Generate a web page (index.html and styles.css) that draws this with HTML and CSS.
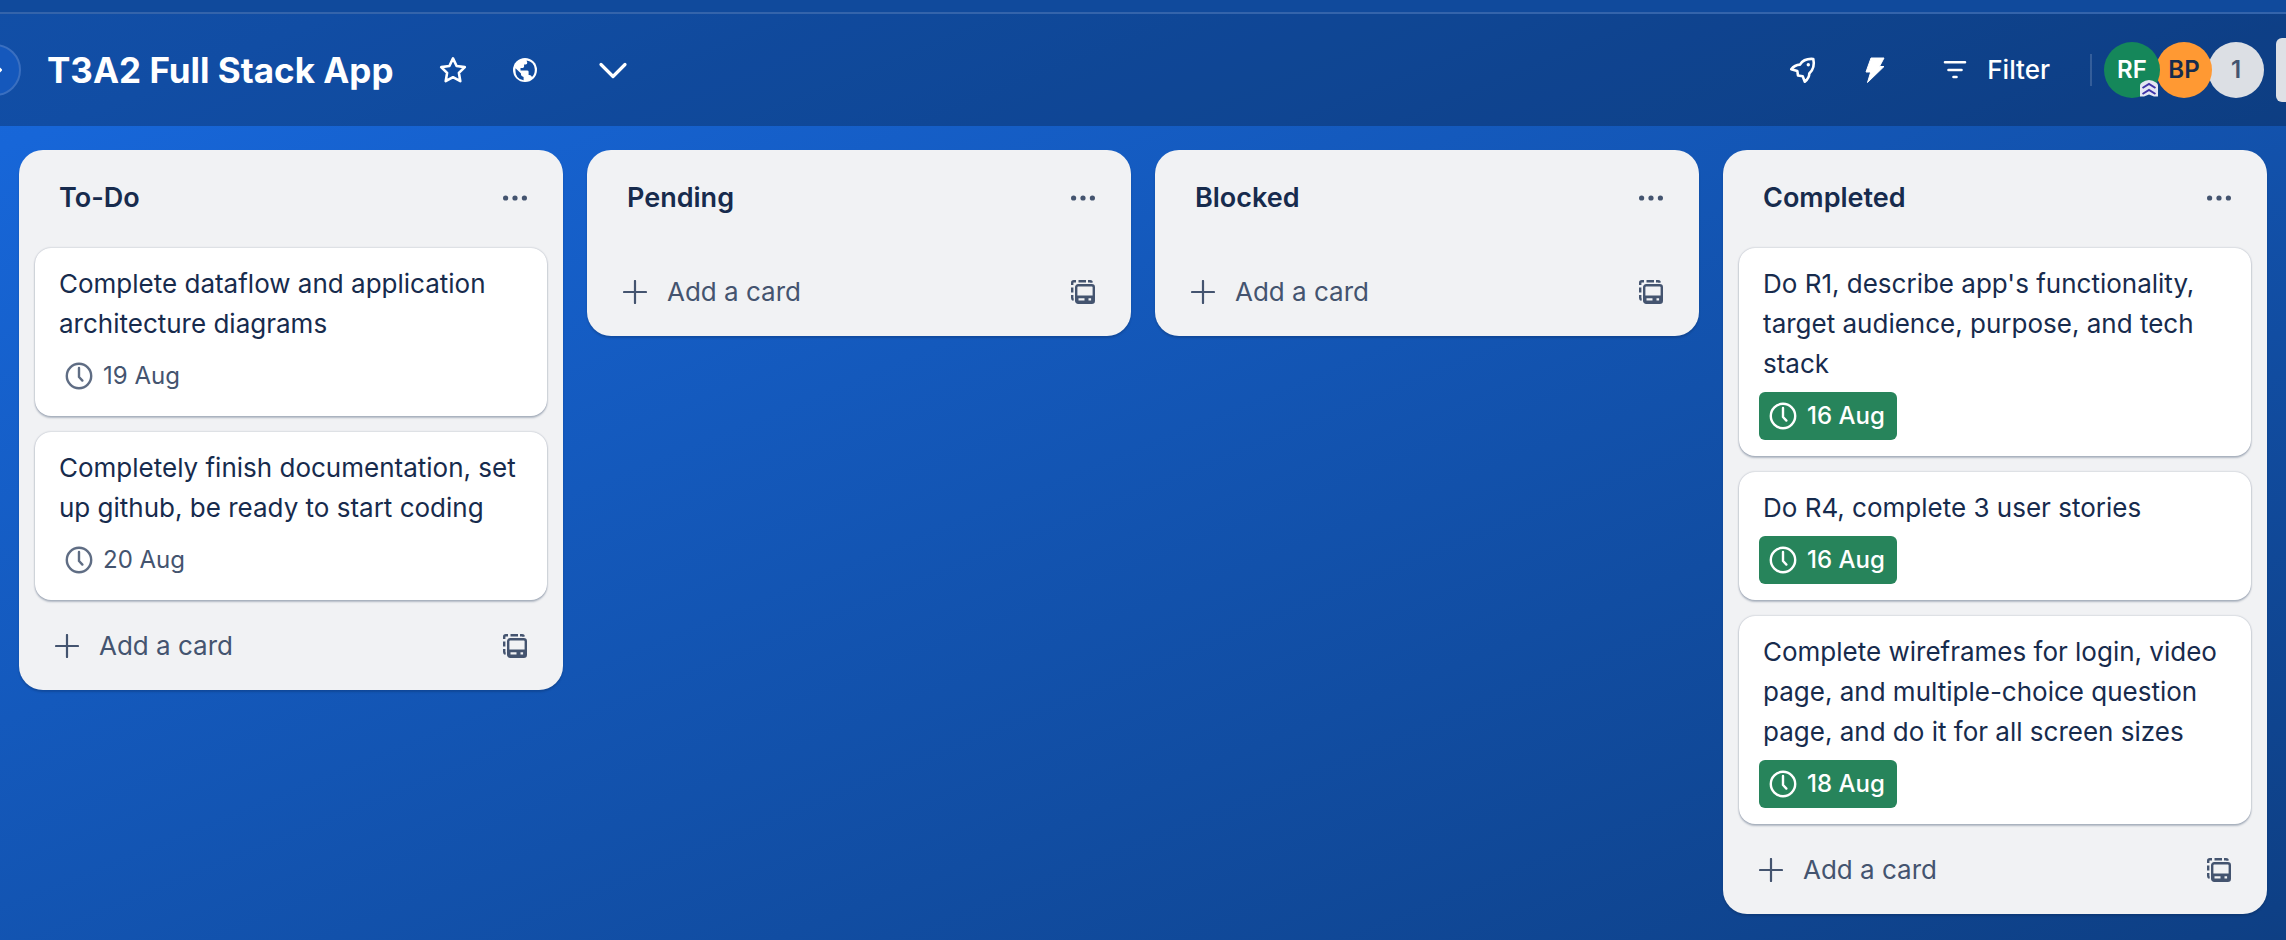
FILE: index.html
```
<!DOCTYPE html>
<html lang="en">
<head>
<meta charset="utf-8">
<title>T3A2 Full Stack App</title>
<link rel="stylesheet" href="styles.css">
</head>
<body>
<svg class="sprite" aria-hidden="true">
  <symbol id="clock" viewBox="0 0 32 32"><g fill="none" stroke="currentColor" stroke-width="2.4" stroke-linecap="round" stroke-linejoin="round"><circle cx="16" cy="16" r="12.2"/><path d="M16 8v9l3.4 3.6"/></g></symbol>
  <symbol id="plus" viewBox="0 0 24 24"><path d="M12 1v22M1 12h22" fill="none" stroke="currentColor" stroke-width="2.2" stroke-linecap="round"/></symbol>
  <symbol id="dots" viewBox="0 0 24 24"><g fill="currentColor"><circle cx="2.6" cy="12" r="2.6"/><circle cx="12" cy="12" r="2.6"/><circle cx="21.4" cy="12" r="2.6"/></g></symbol>
  <symbol id="template" viewBox="0 0 24 24"><g fill="none" stroke="currentColor" stroke-width="2.4"><path d="M1.2 5V2.800Q1.200 1.200 2.800 1.200H5M7.500 1.200h7.500M17 1.200h2.200q1.300 0 1.700 1.400M1.200 7.500v5M1.200 15v3q0 1.500 1.400 1.900"/><rect x="5.200" y="5.200" width="17.600" height="17.600" rx="2"/></g><path fill="currentColor" fill-rule="evenodd" d="M5 15.500h18v7.500H5zM7.500 18.200h6v2.400h-6zM17.500 18.200h2.600v2.400h-2.600z"/></symbol>
</svg>
<div class="topbar"></div>
<header class="header">
  <button class="toggle" aria-label="Expand sidebar"><svg viewBox="0 0 48 48"><path d="M25 19.500l4.500 4.500-4.500 4.500" fill="none" stroke="#fff" stroke-width="3" stroke-linecap="round" stroke-linejoin="round"/></svg></button>
  <h1 class="title">T3A2 Full Stack App</h1>
  <button class="icon-btn" aria-label="Star board"><svg viewBox="0 0 32 32"><path d="M16 4.400l3.600 7.600 8.200 1.100-5.900 5.800 1.400 8.300-7.300-4-7.300 4 1.400-8.300-5.900-5.800 8.200-1.100z" fill="none" stroke="#fff" stroke-width="2.600" stroke-linejoin="round"/></svg></button>
  <button class="icon-btn" aria-label="Visibility"><svg viewBox="0 0 32 32"><circle cx="16" cy="16" r="12" fill="#fff"/><path fill="#114b9e" d="M6.500 14.200l5.500 5.300v1.200q0 1.600 2.600 2.200v3.400Q6.300 25 6.400 16zM17.600 6.400q7.600 1.200 8.200 8.800.1 5-2.800 7.700-.8-1.900-2.600-1.900h-.8v-3.200q0-1.400-1.500-1.400h-6.600v-2.400h2.200q1.400 0 1.400-1.400v-2.200h1.600q1.600 0 1.600-1.600z"/></svg></button>
  <button class="icon-btn wide" aria-label="Views"><svg viewBox="0 0 32 32"><path d="M4 10.500l12 12 12-12" fill="none" stroke="#fff" stroke-width="3.200" stroke-linecap="round" stroke-linejoin="round"/></svg></button>
  <div class="actions">
    <button class="icon-btn" aria-label="Power-Ups"><svg viewBox="0 0 32 32"><path d="M4.200 15.200C6.500 12.200 9 10.800 13 10.600 15.500 6.500 20 4.500 26.300 5 27.700 11 26 16 22.300 19.500 22.300 22.500 20.500 25.500 17.800 27.700L15.700 22.300 11 21.500 10.300 17z" fill="none" stroke="#fff" stroke-width="2.600" stroke-linejoin="round"/><circle cx="21.300" cy="10.800" r="1.700" fill="#fff"/></svg></button>
    <button class="icon-btn" aria-label="Automation"><svg viewBox="0 0 32 32"><path d="M12 4h13l-4.500 8.500H25L8.500 28.500l3.200-10.500H7z" fill="#fff" stroke="#fff" stroke-linejoin="round"/></svg></button>
    <button class="filter"><svg viewBox="0 0 32 32"><path d="M6 8.300h20M9.500 16h13M14.500 23h3" fill="none" stroke="#fff" stroke-width="2.600" stroke-linecap="round"/></svg>Filter</button>
    <span class="divider"></span>
    <div class="members">
      <button class="avatar rf">RF<svg class="rank" viewBox="0 0 18 18"><path d="M9 0q4 .3 7 2.500 2 1 2 3V16.500l-4 0-5-2-5 2-4 0V5.500q0-2 2-3Q5 .3 9 0z" fill="#e4e6f2"/><path d="M2.500 8L9 4l6.500 4M2.500 14L9 10l6.500 4" fill="none" stroke="#3f34a8" stroke-width="2"/></svg></button>
      <button class="avatar bp">BP</button>
      <button class="avatar more">1</button>
    </div>
    <button class="share" aria-label="Share"></button>
  </div>
</header>
<main class="board">
  <section class="list">
    <div class="list-head"><h2>To-Do</h2><button aria-label="List actions"><svg><use href="#dots"/></svg></button></div>
    <ul class="cards">
      <li class="card"><p>Complete dataflow and application architecture diagrams</p><span class="due"><svg><use href="#clock"/></svg>19 Aug</span></li>
      <li class="card"><p>Completely finish documentation, set up github, be ready to start coding</p><span class="due"><svg><use href="#clock"/></svg>20 Aug</span></li>
    </ul>
    <div class="list-foot"><button class="add"><svg><use href="#plus"/></svg>Add a card</button><button class="template" aria-label="Create from template"><svg><use href="#template"/></svg></button></div>
  </section>
  <section class="list">
    <div class="list-head"><h2>Pending</h2><button aria-label="List actions"><svg><use href="#dots"/></svg></button></div>
    <div class="list-foot"><button class="add"><svg><use href="#plus"/></svg>Add a card</button><button class="template" aria-label="Create from template"><svg><use href="#template"/></svg></button></div>
  </section>
  <section class="list">
    <div class="list-head"><h2>Blocked</h2><button aria-label="List actions"><svg><use href="#dots"/></svg></button></div>
    <div class="list-foot"><button class="add"><svg><use href="#plus"/></svg>Add a card</button><button class="template" aria-label="Create from template"><svg><use href="#template"/></svg></button></div>
  </section>
  <section class="list">
    <div class="list-head"><h2>Completed</h2><button aria-label="List actions"><svg><use href="#dots"/></svg></button></div>
    <ul class="cards">
      <li class="card"><p>Do R1, describe app's functionality, target audience, purpose, and tech stack</p><span class="due done"><svg><use href="#clock"/></svg>16 Aug</span></li>
      <li class="card"><p>Do R4, complete 3 user stories</p><span class="due done"><svg><use href="#clock"/></svg>16 Aug</span></li>
      <li class="card"><p>Complete wireframes for login, video page, and multiple-choice question page, and do it for all screen sizes</p><span class="due done"><svg><use href="#clock"/></svg>18 Aug</span></li>
    </ul>
    <div class="list-foot"><button class="add"><svg><use href="#plus"/></svg>Add a card</button><button class="template" aria-label="Create from template"><svg><use href="#template"/></svg></button></div>
  </section>
</main>
</body>
</html>
```
FILE: styles.css
```
* { box-sizing: border-box; }
html { height: 100%; }
body {
  margin: 0;
  min-height: 100%;
  overflow: hidden;
  display: flex;
  flex-direction: column;
  font-family: Inter, "Liberation Sans", sans-serif;
  font-size: 26px;
  line-height: 40px;
  color: #172b4d;
  background: linear-gradient(158deg, #1868db 0%, #1766d8 8%, #0e4086 98%, #0e3f84 100%);
}
h1, h2, p, ul { margin: 0; padding: 0; }
ul { list-style: none; }
button {
  flex: none;
  padding: 0;
  border: 0;
  background: none;
  font: inherit;
  color: inherit;
  cursor: pointer;
}
svg { display: block; flex: none; }
.sprite { position: absolute; width: 0; height: 0; }

.topbar {
  height: 14px;
  background: #104a9c;
  border-bottom: 2px solid #3464ab;
}
.header {
  display: flex;
  align-items: center;
  height: 112px;
  background: rgba(0, 0, 0, 0.24);
  color: #fff;
}
.toggle {
  width: 52px;
  height: 52px;
  margin-left: -31px;
  border: 2px solid #3a6fc0;
  border-radius: 50%;
  background: #1558bc;
}
.title {
  margin: 0 43px 0 26px;
  font-size: 35px;
  font-weight: 700;
}
.icon-btn { margin-right: 40px; }
.icon-btn.wide { margin-left: 16px; }
.icon-btn svg, .filter svg { width: 32px; height: 32px; }
.actions {
  display: flex;
  align-items: center;
  margin-left: auto;
}
.filter {
  display: flex;
  align-items: center;
  gap: 16px;
  margin-left: 8px;
  font-weight: 500;
}
.divider {
  width: 2px;
  height: 32px;
  margin: 0 12px 0 40px;
  background: rgba(255, 255, 255, 0.16);
}
.members { display: flex; }
.avatar {
  position: relative;
  width: 56px;
  height: 56px;
  margin-right: -4px;
  border-radius: 50%;
  font-size: 24px;
  font-weight: 600;
}
.rf { z-index: 3; background: #15875a; color: #fff; }
.bp { z-index: 2; background: #ff9933; color: #172b4d; }
.more { z-index: 1; background: #dcdfe4; color: #44546f; }
.rank {
  position: absolute;
  right: 2px;
  bottom: 0;
  width: 18px;
  height: 18px;
}
.share {
  width: 10px;
  height: 64px;
  margin-left: 16px;
  border-radius: 6px 0 0 6px;
  background: #dfe1e6;
}

.board {
  display: flex;
  align-items: flex-start;
  gap: 24px;
  padding: 24px 19px;
}
.list {
  flex: 1;
  min-width: 0;
  padding: 0 16px 12px;
  border-radius: 24px;
  background: #f1f2f4;
  box-shadow: 0 2px 2px rgba(9, 30, 66, 0.25);
}
.list-head {
  display: flex;
  align-items: center;
  justify-content: space-between;
  height: 98px;
  padding: 0 20px 2px 24px;
  color: #44546f;
}
.list-head h2 {
  font-size: 27px;
  line-height: 40px;
  font-weight: 600;
  color: #172b4d;
}
.list-head svg, .list-foot svg { width: 24px; height: 24px; }
.cards {
  display: flex;
  flex-direction: column;
  gap: 16px;
  padding-bottom: 2px;
}
.card {
  padding: 16px 20px;
  border-radius: 16px;
  background: #fff;
  box-shadow: 0 2px 2px rgba(9, 30, 66, 0.25), 0 0 2px rgba(9, 30, 66, 0.31);
}
.card p { margin: 0 0 8px; padding-left: 4px; }
.due {
  display: flex;
  align-items: center;
  gap: 8px;
  width: fit-content;
  height: 48px;
  padding: 0 12px 0 8px;
  border-radius: 6px;
  font-size: 24px;
  color: #44546f;
}
.due svg { width: 32px; height: 32px; opacity: 0.85; }
.due.done svg { opacity: 1; }
.due.done {
  background: #27845b;
  color: #fff;
  font-weight: 500;
}
.list-foot {
  display: flex;
  align-items: center;
  justify-content: space-between;
  padding: 12px 20px 0 20px;
  color: #44546f;
}
.add {
  display: flex;
  align-items: center;
  gap: 20px;
  height: 64px;
}
```
